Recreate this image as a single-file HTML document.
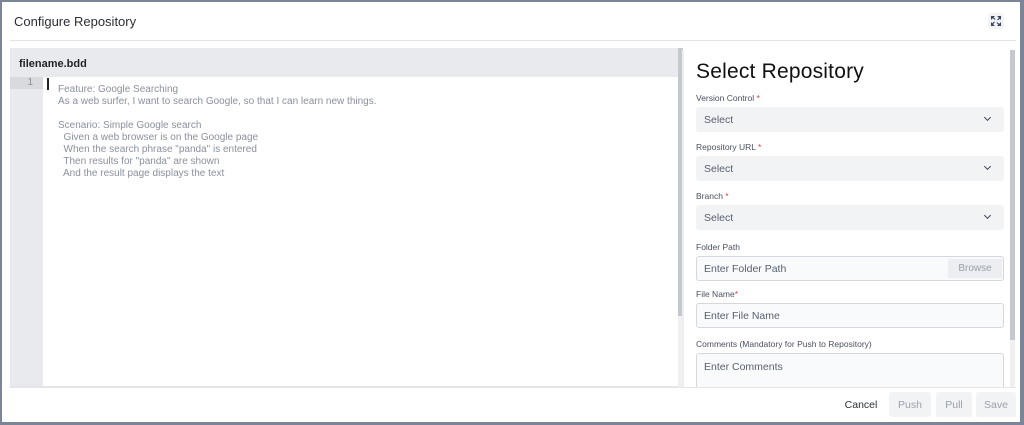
<!DOCTYPE html>
<html><head><style>
*{box-sizing:border-box;margin:0;padding:0}
body{width:1024px;height:425px;background:#7b8597;font-family:"Liberation Sans",sans-serif;position:relative;overflow:hidden}
.modal{position:absolute;left:2px;top:2px;width:1018px;height:420px;background:#fff}
.title{position:absolute;left:12px;top:12px;font-size:13px;color:#2b2f36}
.hr{position:absolute;left:8px;right:4px;top:38px;border-top:1px solid #e3e5e8}
.exp{position:absolute;left:986px;top:11px;width:16px;height:16px;background:#f2f3f5;border-radius:3px}
.editor{position:absolute;left:8px;top:46px;width:672px;height:339px;border-bottom:1px solid #e3e5e8}
.ehead{height:29px;background:#e9eaed;font-weight:bold;font-size:11px;color:#1f2329;padding:10px 0 0 9px}
.gutter{position:absolute;left:0;top:29px;width:33px;bottom:0;background:#e9eaed}
.ln{position:absolute;left:0;top:29px;width:33px;height:12px;background:#d9dadd;font-size:10px;color:#8b8f96;text-align:right;padding-right:10px}
.cursor{position:absolute;left:37px;top:30px;width:2px;height:12px;background:#222}
.code{position:absolute;left:48px;top:36px;font-size:10px;line-height:12px;color:#8a909d;white-space:pre}
.sb1{position:absolute;left:668px;top:0;width:5px;height:339px;background:#f0f0f0}
.sb1 div{height:268px;background:#c5c8cd}
.right{position:absolute;left:694px;top:48px;width:308px}
h1{font-size:21px;font-weight:normal;color:#111;margin-top:10px;letter-spacing:.2px}
.lab{font-size:8.5px;color:#4a5060;margin-top:9px;height:10px}
.lab b{color:#d9413f;font-weight:normal}
.sel{height:25px;background:#f2f3f5;border-radius:3px;margin-top:4px;font-size:10.5px;color:#596070;padding:7px 0 0 8px;position:relative}
.sel:after{content:"";position:absolute;right:14px;top:8px;width:4px;height:4px;border-right:1.5px solid #3d4454;border-bottom:1.5px solid #3d4454;transform:rotate(45deg)}
.inp{height:25px;border:1px solid #d4d7dc;border-radius:3px;margin-top:4px;background:#f9fafb;font-size:10.5px;color:#596070;padding:6px 0 0 7px;position:relative}
.br{position:absolute;right:1px;top:2px;width:54px;height:19px;background:#eceef1;color:#9aa0aa;font-size:10px;text-align:center;padding-top:4px}
.sb2{position:absolute;left:1008px;top:48px;width:5px;height:338px;background:#f0f0f0}
.sb2 div{height:290px;background:#c5c8cd}
.left-edge{position:absolute;left:680px;top:48px;width:2px;height:338px;background:#eceef1}
.btn{position:absolute;top:390px;height:25px;font-size:10.5px;color:#9aa0aa;background:#f2f3f5;border-radius:3px;text-align:center;padding-top:7px}
</style></head><body>
<div class="modal">
<div class="title">Configure Repository</div>
<div class="exp"><svg width="16" height="16" viewBox="0 0 16 16"><g fill="#3d4660"><path d="M3 3h4l-1.3 1.3 1.8 1.8-.8.8-1.8-1.8L3 7z"/><path d="M13 3v4l-1.3-1.3-1.8 1.8-.8-.8 1.8-1.8L9 3z"/><path d="M3 13V9l1.3 1.3 1.8-1.8.8.8-1.8 1.8L7 13z"/><path d="M13 13H9l1.3-1.3-1.8-1.8.8-.8 1.8 1.8L13 9z"/></g></svg></div>
<div class="hr"></div>
<div class="editor">
<div class="ehead">filename.bdd</div>
<div class="gutter"></div>
<div class="ln">1</div>
<div class="cursor"></div>
<div class="code">Feature: Google Searching
As a web surfer, I want to search Google, so that I can learn new things.

Scenario: Simple Google search
  Given a web browser is on the Google page
  When the search phrase "panda" is entered
  Then results for "panda" are shown
  And the result page displays the text</div>
<div class="sb1"><div></div></div>
</div>
<div class="left-edge"></div>
<div class="right">
<h1>Select Repository</h1>
<div class="lab">Version Control <b>*</b></div>
<div class="sel">Select</div>
<div class="lab" style="margin-top:10px">Repository URL <b>*</b></div>
<div class="sel">Select</div>
<div class="lab" style="margin-top:10px">Branch <b>*</b></div>
<div class="sel">Select</div>
<div class="lab" style="margin-top:12px">Folder Path</div>
<div class="inp">Enter Folder Path<div class="br">Browse</div></div>
<div class="lab" style="margin-top:8px">File Name<b>*</b></div>
<div class="inp">Enter File Name</div>
<div class="lab" style="margin-top:11px">Comments (Mandatory for Push to Repository)</div>
<div class="inp" style="height:50px;padding-top:7px">Enter Comments</div>
</div>
<div class="sb2"><div></div></div>
<div style="position:absolute;left:8px;right:4px;top:385px;height:35px;background:#fff;border-top:1px solid #e3e5e8"></div>
<div class="btn" style="left:834px;width:50px;background:none;color:#2b2f36">Cancel</div>
<div class="btn" style="left:887px;width:42px">Push</div>
<div class="btn" style="left:934px;width:36px">Pull</div>
<div class="btn" style="left:974px;width:40px">Save</div>
</div>
</body></html>
